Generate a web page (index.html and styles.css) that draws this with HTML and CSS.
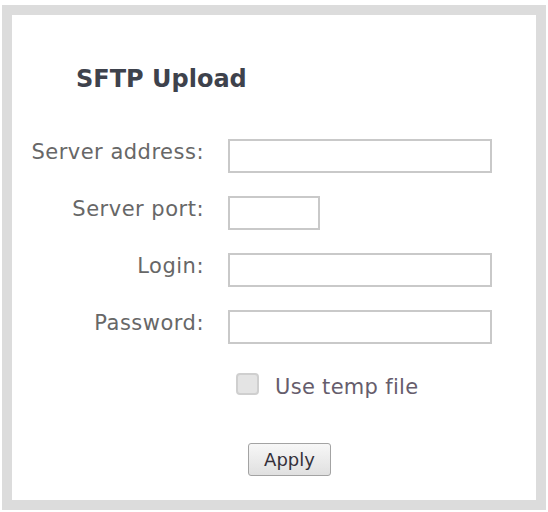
FILE: index.html
```html
<!DOCTYPE html>
<html lang="en">
<head>
    <meta charset="UTF-8">
    <meta name="viewport" content="width=device-width, initial-scale=1.0">
    <title>SFTP Upload</title>
    <link rel="stylesheet" href="styles.css">
</head>
<body>
    <div class="panel">
        <h2 class="panel-title">SFTP Upload</h2>

        <!-- SFTP settings -->
        <form class="sftp-form" onsubmit="return false">
            <label class="field-label" for="server">Server address:</label>
            <input class="field wide" type="text" id="server">

            <label class="field-label" for="port">Server port:</label>
            <input class="field short" type="text" id="port">

            <label class="field-label" for="login">Login:</label>
            <input class="field wide" type="text" id="login">

            <label class="field-label" for="password">Password:</label>
            <input class="field wide" type="password" id="password">

            <div class="check-row">
                <input class="check" type="checkbox" id="tempfile">
                <label class="check-label" for="tempfile">Use temp file</label>
            </div>

            <div class="actions">
                <button type="submit" class="apply-btn">Apply</button>
            </div>
        </form>
    </div>
</body>
</html>
```

FILE: styles.css
```css
* {
    margin: 0;
    padding: 0;
    box-sizing: border-box;
}

body {
    font-family: "DejaVu Sans", Verdana, sans-serif;
    background: #fff;
    width: 548px;
    height: 512px;
    overflow: hidden;
}

.panel {
    margin: 5px 0 0 2px;
    width: 544px;
    height: 505px;
    border: 10px solid #dcdcdc;
    background: #fff;
    padding-top: 50px;
}

.panel-title {
    margin-left: 64px;
    font-size: 24px;
    line-height: 28px;
    font-weight: bold;
    color: #3e424c;
}

.sftp-form {
    margin-top: 46px;
    display: grid;
    grid-template-columns: 192px auto;
    column-gap: 24px;
    row-gap: 23px;
    align-items: center;
}

.field-label {
    text-align: right;
    font-size: 21px;
    letter-spacing: 0.5px;
    color: #676767;
    padding-bottom: 8px;
}

.field {
    height: 34px;
    border: 2px solid #c9c9c9;
    background: #fff;
    font-size: 16px;
    padding: 0 6px;
}

.field:focus {
    outline: none;
    border-color: #aaa;
}

.wide {
    width: 264px;
}

.short {
    width: 92px;
}

.check-row {
    grid-column: 2;
    display: flex;
    align-items: center;
    margin-top: 2px;
    padding-left: 8px;
}

.check {
    appearance: none;
    -webkit-appearance: none;
    width: 23px;
    height: 22px;
    border: 2px solid #cfcfcf;
    border-radius: 4px;
    background: #e4e4e4;
    cursor: pointer;
}

.check:checked {
    background: #9a9a9a;
}

.check-label {
    margin-left: 16px;
    padding-top: 6px;
    font-size: 21px;
    letter-spacing: 0.3px;
    color: #665d6c;
    cursor: pointer;
}

.actions {
    grid-column: 2;
    margin-top: 21px;
    padding-left: 20px;
}

.apply-btn {
    width: 83px;
    height: 33px;
    font-family: "DejaVu Sans", Verdana, sans-serif;
    font-size: 18px;
    color: #34303a;
    background: linear-gradient(to bottom, #f7f7f7, #e0e0e0);
    border: 1px solid #a3a3a3;
    border-radius: 3px;
    cursor: pointer;
}

.apply-btn:hover {
    background: linear-gradient(to bottom, #fff, #e8e8e8);
}
```
